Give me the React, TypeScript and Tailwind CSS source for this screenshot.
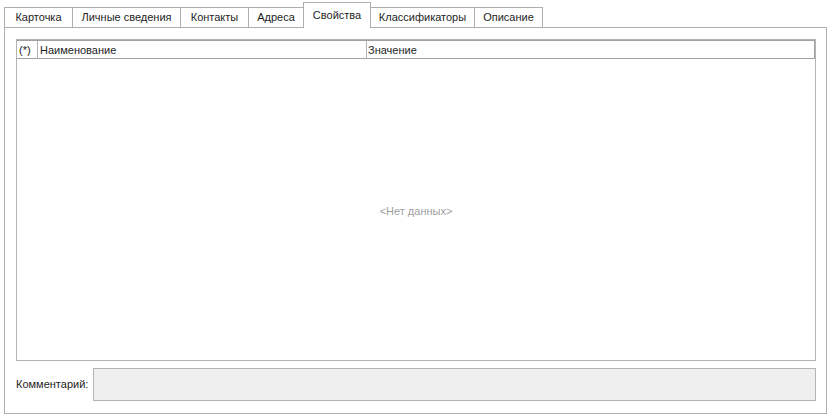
import React from 'react';

const tabs = [
    { label: 'Карточка', w: 'w-[69px]' },
    { label: 'Личные сведения', w: 'w-[109px]' },
    { label: 'Контакты', w: 'w-[69px]' },
    { label: 'Адреса', w: 'w-[56px]' },
    { label: 'Свойства', w: 'w-[68px]' },
    { label: 'Классификаторы', w: 'w-[105px]' },
    { label: 'Описание', w: 'w-[69px]' },
];
const activeTab = 'Свойства';

export default function App() {
    return (
        <div
            className="w-[833px] h-[417px] bg-white text-[11px] text-[#1e1e1e] pl-[4px] pr-[6px] pt-[1px] pb-[3px] flex flex-col"
            style={{ fontFamily: '"Liberation Sans", Arial, sans-serif' }}
        >
            {/* tab strip */}
            <div className="flex items-end h-[26px] shrink-0">
                {tabs.map((tab, i) => {
                    const active = tab.label === activeTab;
                    return (
                        <div
                            key={tab.label}
                            className={
                                (active
                                    ? 'h-[26px] pt-[6px] relative top-[1px] z-10'
                                    : 'h-[20px] pt-[3px]') +
                                ' ' + tab.w +
                                ' border border-b-0 border-[#adadad] bg-white text-center' +
                                (i > 0 ? ' -ml-px' : '')
                            }
                        >
                            <span className="whitespace-nowrap leading-[13px] block">{tab.label}</span>
                        </div>
                    );
                })}
            </div>

            {/* page body */}
            <div className="flex-1 border border-[#adadad] pl-[11px] pr-[10px] pt-[11px] pb-[12px] flex flex-col">
                <div className="flex-1 border border-[#b4b4b4] flex flex-col">
                    <div className="flex h-[19px] border-b border-r border-[#a0a0a0] border-t shrink-0 leading-[18px]">
                        <div className="w-[21px] border-r border-[#b4b4b4] pl-[2px]">(*)</div>
                        <div className="w-[329px] border-r border-[#b4b4b4] pl-[2px]">Наименование</div>
                        <div className="flex-1 pl-[1px]">Значение</div>
                    </div>
                    <div className="flex-1 flex items-center justify-center pt-[4px]">
                        <span className="text-[#a0a0a0]">&lt;Нет данных&gt;</span>
                    </div>
                </div>

                <div className="flex items-center mt-[7px] h-[33px] shrink-0">
                    <span className="w-[77px] shrink-0 whitespace-nowrap">Комментарий:</span>
                    <div className="flex-1 h-[33px] bg-[#efefef] border border-[#b4b4b4]" />
                </div>
            </div>
        </div>
    );
}
